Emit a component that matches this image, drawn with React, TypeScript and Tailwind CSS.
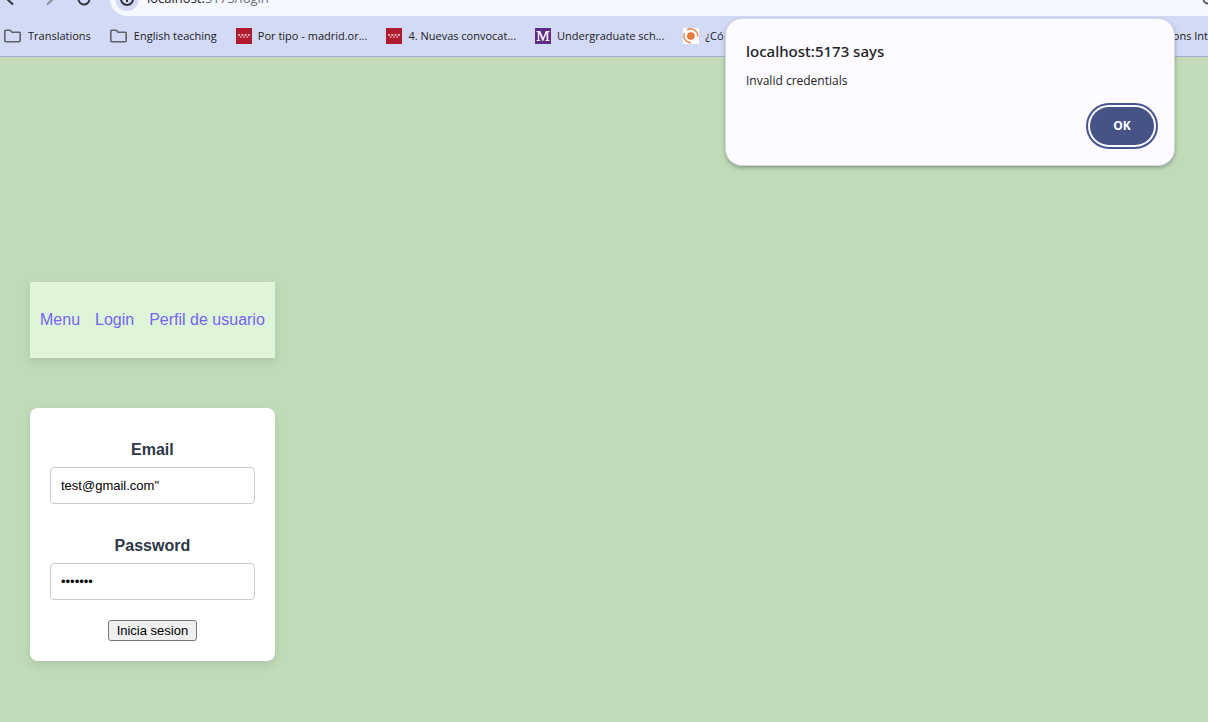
import { useState, type ReactNode } from "react";

function FolderIcon() {
  return (
    <svg width="18" height="16" viewBox="0 0 18 16" fill="none" stroke="#5f6167" strokeWidth="1.6" className="shrink-0" aria-hidden="true">
      <path d="M1.8 2.3h4.4l1.8 1.9h7.2a1 1 0 0 1 1 1v7.6a1 1 0 0 1-1 1H1.8a1 1 0 0 1-1-1V3.3a1 1 0 0 1 1-1z" strokeLinejoin="round" />
    </svg>
  );
}

function MadridIcon() {
  return (
    <svg width="16" height="16" viewBox="0 0 16 16" className="shrink-0" aria-hidden="true">
      <rect width="16" height="16" fill="#b01c2e" />
      <path d="M2 6.8h12" fill="none" stroke="#eeb9c0" strokeWidth="1.8" strokeDasharray="2 1.33" />
      <path d="M3.8 8.9h9" fill="none" stroke="#e9a9b2" strokeWidth="1.5" strokeDasharray="1.8 1.5" />
    </svg>
  );
}

function UniversityIcon() {
  return (
    <svg width="16" height="16" viewBox="0 0 16 16" className="shrink-0" aria-hidden="true">
      <rect width="16" height="16" fill="#5f2d82" />
      <path d="M1.5 3h3.8l2.8 6.6L10.8 3h3.7v.9l-1.2.3v7.7l1.2.3v.8h-4.2v-.8l1.2-.3V5.4L8.2 13h-.8L4.2 5.6v6.3l1.2.3v.8H1.5v-.8l1.3-.3V4.2l-1.3-.3z" fill="#f1e9f6" />
    </svg>
  );
}

function TargetIcon() {
  return (
    <svg width="16" height="16" viewBox="0 0 16 16" className="shrink-0" aria-hidden="true">
      <rect width="16" height="16" fill="#fff" />
      <circle cx="7.8" cy="8" r="3.8" fill="#e2702c" />
      <circle cx="7.8" cy="8" r="1.6" fill="none" stroke="#f0ab80" strokeWidth=".6" />
      <path d="M4 1.8A7 7 0 0 1 14.6 8.5M8 14.8A6.9 6.9 0 0 1 1.6 5" fill="none" stroke="#e58a50" strokeWidth="1.4" />
    </svg>
  );
}

function Bookmark({ icon, children }: { icon?: ReactNode; children: ReactNode }) {
  return (
    <a href="#" className="flex shrink-0 items-center gap-1.5 whitespace-nowrap">
      {icon}
      {children}
    </a>
  );
}

function BrowserBar() {
  return (
    <header className="h-[57px] overflow-hidden border-b border-[#a9aecb] bg-[#d3daf5] font-['Open_Sans','Noto_Sans',sans-serif] text-[#202124]">
      <div className="flex h-4 items-end">
        <div className="flex h-[34px] w-[110px] shrink-0 items-center gap-5">
          <button aria-label="Back">
            <svg width="18" height="18" viewBox="0 0 18 18" fill="none" stroke="#30343c" strokeWidth="2"><path d="M13 2L6.5 8.5l6.5 6" /></svg>
          </button>
          <button aria-label="Forward">
            <svg width="18" height="18" viewBox="0 0 18 18" fill="none" stroke="#8b909e" strokeWidth="2"><path d="M9 2l6.500 6.500L9 14.500" /></svg>
          </button>
          <button aria-label="Reload">
            <svg width="18" height="18" viewBox="0 0 18 18" fill="none" stroke="#30343c" strokeWidth="2"><path d="M13.500 9A5.500 5.500 0 1 1 12 5.200" /></svg>
          </button>
        </div>
        <div className="flex h-[34px] flex-1 items-center rounded-l-full bg-[#f5f8fe] pl-[5px]">
          <svg width="24" height="24" viewBox="0 0 24 24" aria-hidden="true">
            <circle cx="12" cy="12" r="12" fill="#d3daf5" />
            <circle cx="12" cy="12" r="6" fill="none" stroke="#30343c" strokeWidth="2" />
            <path d="M12 11v4" stroke="#30343c" strokeWidth="2" />
          </svg>
          <span className="ml-2 text-[13px]">localhost:<span className="text-[#6b6e75]">5173/login</span></span>
          <svg width="6" height="12" viewBox="0 0 6 12" fill="none" stroke="#5b5e66" strokeWidth="2" className="ml-auto" aria-hidden="true">
            <circle cx="6" cy="6" r="4.500" />
          </svg>
        </div>
      </div>
      <nav aria-label="Bookmarks" className="flex h-10 items-center gap-[19px] pl-1 text-[11px]">
        <Bookmark icon={<FolderIcon />}>Translations</Bookmark>
        <Bookmark icon={<FolderIcon />}>English teaching</Bookmark>
        <Bookmark icon={<MadridIcon />}>Por tipo - madrid.or...</Bookmark>
        <Bookmark icon={<MadridIcon />}>4. Nuevas convocat...</Bookmark>
        <Bookmark icon={<UniversityIcon />}>Undergraduate sch...</Bookmark>
        <Bookmark icon={<TargetIcon />}>¿Có</Bookmark>
        <span className="ml-auto"><Bookmark>ons Int</Bookmark></span>
      </nav>
    </header>
  );
}

function AlertDialog() {
  return (
    <section
      role="alertdialog"
      aria-labelledby="alert-title"
      aria-describedby="alert-text"
      className="absolute top-[19px] right-[34px] w-md rounded-2xl bg-[#fdfbff] px-5 pt-5 pb-4 font-['Open_Sans','Noto_Sans',sans-serif] text-[#202124] shadow-[0_0_0_1px_#d5d8df,0_2px_5px_rgba(0,0,0,0.4)]"
    >
      <h1 id="alert-title" className="font-['Noto_Sans','Open_Sans',sans-serif] text-[15px] leading-6 font-medium">localhost:5173 says</h1>
      <p id="alert-text" className="mt-2 text-xs leading-5">Invalid credentials</p>
      <div className="-mr-1 mt-3 flex justify-end">
        <button className="rounded-full border-2 border-[#465590] p-0.5">
          <span className="flex h-[38px] w-16 items-center justify-center rounded-full bg-[#465384] text-xs font-bold text-white">OK</span>
        </button>
      </div>
    </section>
  );
}

const fieldClass =
  "mt-[5px] block h-[37px] w-full rounded border border-[#ccc] bg-white px-2.5 text-[13px] font-normal text-black outline-none";

function LoginForm() {
  const [email, setEmail] = useState('test@gmail.com"');
  const [password, setPassword] = useState("abcdefg");
  return (
    <form
      onSubmit={(event) => event.preventDefault()}
      className="mt-[50px] rounded-lg bg-white px-5 pt-[30px] pb-5 text-center shadow-[0_4px_8px_rgba(0,0,0,0.1)]"
    >
      <label className="block leading-6 font-bold text-[#2d3748]">
        Email
        <input type="text" value={email} onChange={(event) => setEmail(event.target.value)} className={fieldClass} />
      </label>
      <label className="mt-[30px] block leading-6 font-bold text-[#2d3748]">
        Password
        <input type="password" value={password} onChange={(event) => setPassword(event.target.value)} className={fieldClass} />
      </label>
      <button type="submit" className="mx-auto mt-5 block h-[21px] rounded-[3px] border border-[#767676] bg-[#efefef] px-2 text-[13px] leading-4 text-black">
        Inicia sesion
      </button>
    </form>
  );
}

export default function App() {
  return (
    <div className="relative min-h-screen bg-[#c1dbb8] font-['Liberation_Sans',Arial,sans-serif]">
      <BrowserBar />
      <main className="w-fit px-[30px] pt-[225px] pb-[60px]">
        <nav aria-label="Main" className="flex h-[76px] items-center gap-[15px] bg-[#def5d9] px-2.5 text-[#7564f0] shadow-[0_4px_8px_rgba(0,0,0,0.1)]">
          <a href="#">Menu</a>
          <a href="#">Login</a>
          <a href="#">Perfil de usuario</a>
        </nav>
        <LoginForm />
      </main>
      <AlertDialog />
    </div>
  );
}
